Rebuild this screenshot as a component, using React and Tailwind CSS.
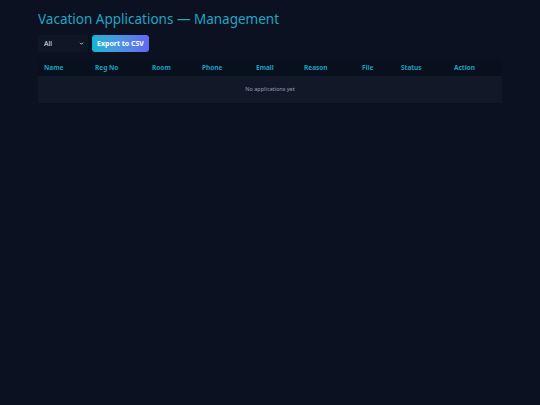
import React, { useState } from "react";

const COLS = [
  { label: "Name", w: "w-[51px]" },
  { label: "Reg No", w: "w-[57px]" },
  { label: "Room", w: "w-[50px]" },
  { label: "Phone", w: "w-[54px]" },
  { label: "Email", w: "w-[48px]" },
  { label: "Reason", w: "w-[58px]" },
  { label: "File", w: "w-[39px]" },
  { label: "Status", w: "w-[53px]" },
  { label: "Action", w: "w-[54px]" },
];

export default function App() {
  const [filter, setFilter] = useState("All");
  const apps = [];

  return (
    <div className="min-h-screen w-full bg-[#0b1120] font-['Noto_Sans',sans-serif] text-slate-200">
      <div className="px-[38px] pt-[10px]">
        <h1 className="text-[13.5px] leading-[19px] text-[#22a5c3]">Vacation Applications — Management</h1>

        <div className="mt-[6px] flex h-[17px] items-center gap-[4px]">
          <div className="relative h-[17px]">
            <select
              value={filter}
              onChange={(e) => setFilter(e.target.value)}
              className="block h-[17px] w-[50px] appearance-none rounded-[3px] bg-[#0f1726] py-0 pl-[6px] text-[7px] leading-[17px] text-slate-200 outline-none"
            >
              <option>All</option>
              <option>Pending</option>
              <option>Approved</option>
              <option>Rejected</option>
            </select>
            <svg
              viewBox="0 0 10 10"
              className="pointer-events-none absolute right-[4px] top-[6px] h-[5px] w-[5px] text-slate-300"
              fill="none"
              stroke="currentColor"
              strokeWidth="1.8"
            >
              <path d="M2 3.5 5 6.5 8 3.5" />
            </svg>
          </div>
          <button className="h-[17px] rounded-[3px] bg-gradient-to-r from-[#06b6d4] to-[#6366f1] px-[5px] text-[7px] leading-[17px] font-bold text-white">
            Export to CSV
          </button>
        </div>

        <table className="mt-[8px] w-full table-fixed border-collapse">
          <thead>
            <tr className="bg-[#08101e]">
              {COLS.map((c) => (
                <th
                  key={c.label}
                  className={`${c.w} h-[16px] p-0 pl-[6px] text-left text-[6.5px] leading-[16px] font-bold text-[#1d9fbd]`}
                >
                  {c.label}
                </th>
              ))}
            </tr>
          </thead>
          <tbody>
            {apps.length === 0 && (
              <tr className="bg-[#111827]">
                <td colSpan={9} className="h-[27px] p-0 text-center text-[5.5px] text-slate-400">
                  No applications yet
                </td>
              </tr>
            )}
          </tbody>
        </table>
      </div>
    </div>
  );
}
